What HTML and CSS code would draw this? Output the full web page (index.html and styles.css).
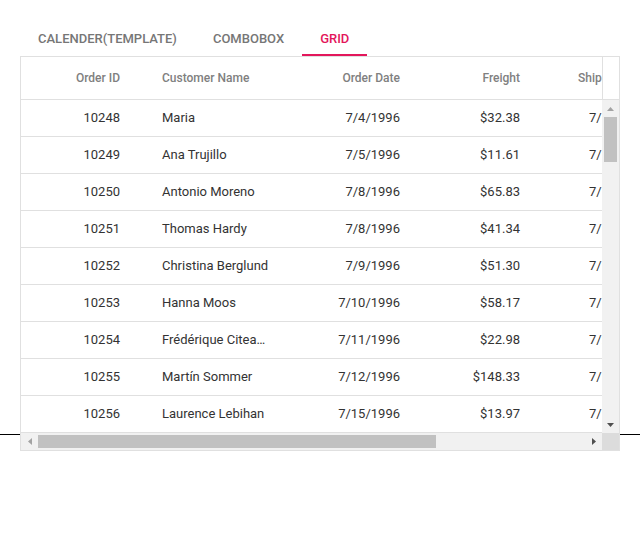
FILE: index.html
```html
<!DOCTYPE html>
<html>
<head>
<meta charset="utf-8">
<link rel="stylesheet" href="styles.css">
</head>
<body>
<div class="page">
  <div class="tabs">
    <div class="tab">Calender(Template)</div>
    <div class="tab">Combobox</div>
    <div class="tab active">Grid</div>
  </div>
  <div class="grid">
    <div class="ghead">
      <div class="hcells">
        <div class="c c1 r">Order ID</div>
        <div class="c c2">Customer Name</div>
        <div class="c c3 r">Order Date</div>
        <div class="c c4 r">Freight</div>
        <div class="c c5 hship">Ship Date</div>
      </div>
      <div class="hpad"></div>
    </div>
    <div class="gbody">
      <div class="content">
        <div class="row"><div class="c c1 r">10248</div><div class="c c2">Maria</div><div class="c c3 r">7/4/1996</div><div class="c c4 r">$32.38</div><div class="c c5 dship">7/16/1996</div></div>
        <div class="row"><div class="c c1 r">10249</div><div class="c c2">Ana Trujillo</div><div class="c c3 r">7/5/1996</div><div class="c c4 r">$11.61</div><div class="c c5 dship">7/10/1996</div></div>
        <div class="row"><div class="c c1 r">10250</div><div class="c c2">Antonio Moreno</div><div class="c c3 r">7/8/1996</div><div class="c c4 r">$65.83</div><div class="c c5 dship">7/12/1996</div></div>
        <div class="row"><div class="c c1 r">10251</div><div class="c c2">Thomas Hardy</div><div class="c c3 r">7/8/1996</div><div class="c c4 r">$41.34</div><div class="c c5 dship">7/15/1996</div></div>
        <div class="row"><div class="c c1 r">10252</div><div class="c c2">Christina Berglund</div><div class="c c3 r">7/9/1996</div><div class="c c4 r">$51.30</div><div class="c c5 dship">7/11/1996</div></div>
        <div class="row"><div class="c c1 r">10253</div><div class="c c2">Hanna Moos</div><div class="c c3 r">7/10/1996</div><div class="c c4 r">$58.17</div><div class="c c5 dship">7/16/1996</div></div>
        <div class="row"><div class="c c1 r">10254</div><div class="c c2">Frédérique Citeaux</div><div class="c c3 r">7/11/1996</div><div class="c c4 r">$22.98</div><div class="c c5 dship">7/23/1996</div></div>
        <div class="row"><div class="c c1 r">10255</div><div class="c c2">Martín Sommer</div><div class="c c3 r">7/12/1996</div><div class="c c4 r">$148.33</div><div class="c c5 dship">7/15/1996</div></div>
        <div class="row"><div class="c c1 r">10256</div><div class="c c2">Laurence Lebihan</div><div class="c c3 r">7/15/1996</div><div class="c c4 r">$13.97</div><div class="c c5 dship">7/17/1996</div></div>
      </div>
      <div class="vscroll">
        <div class="sbtn"><svg width="7" height="4" viewBox="0 0 7 4"><path d="M0 4 L3.5 0 L7 4 Z" fill="#a3a3a3"/></svg></div>
        <div class="vtrack"><div class="vthumb"></div></div>
        <div class="sbtn"><svg width="7" height="4" viewBox="0 0 7 4"><path d="M0 0 L7 0 L3.5 4 Z" fill="#505050"/></svg></div>
      </div>
    </div>
    <div class="hscroll">
      <div class="hbar">
        <div class="sbtn"><svg width="4" height="7" viewBox="0 0 4 7"><path d="M4 0 L4 7 L0 3.5 Z" fill="#a3a3a3"/></svg></div>
        <div class="htrack"><div class="hthumb"></div></div>
        <div class="sbtn"><svg width="4" height="7" viewBox="0 0 4 7"><path d="M0 0 L4 3.5 L0 7 Z" fill="#505050"/></svg></div>
      </div>
      <div class="corner"></div>
    </div>
  </div>
</div>
</body>
</html>
```

FILE: styles.css
```css
html, body {
  margin: 0;
  padding: 0;
}
body {
  font-family: Roboto, "Liberation Sans", sans-serif;
  background: #fff linear-gradient(#000, #000) 0 434px / 100% 1px no-repeat;
  min-height: 540px;
}
.page {
  padding: 20px 20px 0 20px;
}
.tabs {
  display: flex;
  height: 36px;
}
.tab {
  display: flex;
  align-items: center;
  padding: 3px 18px 0 18px;
  box-sizing: border-box;
  height: 36px;
  font-size: 13px;
  font-weight: 500;
  text-transform: uppercase;
  color: #767676;
  border-bottom: 2px solid transparent;
}
.tab.active {
  color: #e3165b;
  border-bottom-color: #e3165b;
}
.grid {
  width: 600px;
  box-sizing: border-box;
  border: 1px solid #e0e0e0;
  background: #fff;
  display: flex;
  flex-direction: column;
}
.ghead {
  display: flex;
  height: 43px;
  box-sizing: border-box;
  border-bottom: 1px solid #e0e0e0;
}
.hcells {
  width: 581px;
  display: flex;
  overflow: hidden;
  font-size: 12px;
  font-weight: 500;
  color: #808080;
}
.hcells .c {
  line-height: 42px;
}
.hpad {
  width: 17px;
  box-sizing: border-box;
  border-left: 1px solid #e0e0e0;
}
.c {
  flex: none;
  box-sizing: border-box;
  padding: 0 21px;
  line-height: 36px;
  white-space: nowrap;
  overflow: hidden;
  text-overflow: ellipsis;
}
.c.r {
  text-align: right;
}
.c1 { width: 120px; }
.c2 { width: 150px; }
.c3 { width: 130px; }
.c4 { width: 120px; }
.c5 { width: 130px; text-overflow: clip; }
.hship { padding-left: 37px; }
.dship { padding-left: 48px; }
.gbody {
  display: flex;
  height: 333px;
}
.content {
  width: 581px;
  overflow: hidden;
  font-size: 13px;
  color: #333;
}
.row {
  display: flex;
  height: 37px;
  box-sizing: border-box;
  border-bottom: 1px solid #e0e0e0;
}
.vscroll {
  width: 17px;
  background: #f1f1f1;
  display: flex;
  flex-direction: column;
}
.sbtn {
  flex: none;
  width: 17px;
  height: 17px;
  display: flex;
  align-items: center;
  justify-content: center;
}
.vtrack {
  flex: 1;
}
.vthumb {
  width: 13px;
  height: 45px;
  margin: 0 2px;
  background: #c1c1c1;
}
.hscroll {
  display: flex;
  height: 17px;
}
.hbar {
  width: 581px;
  display: flex;
  background: #f1f1f1;
}
.htrack {
  flex: 1;
}
.hthumb {
  width: 398px;
  height: 13px;
  margin-top: 2px;
  background: #c1c1c1;
}
.corner {
  width: 17px;
  background: #dcdcdc;
}
```
